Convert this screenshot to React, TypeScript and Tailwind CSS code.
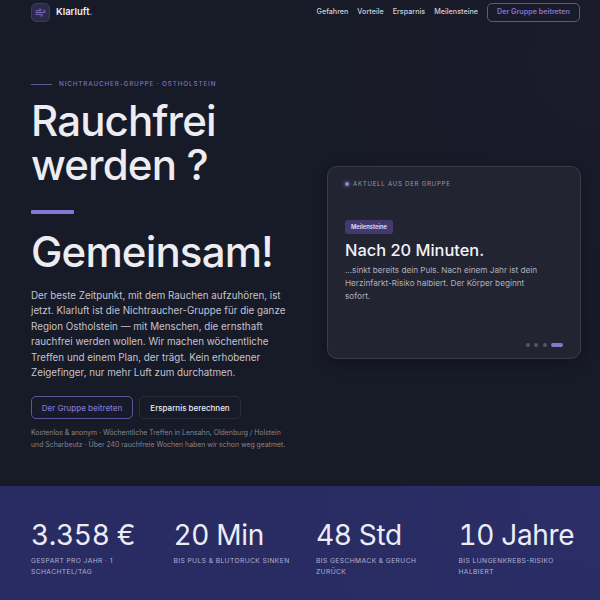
import { Wind } from "lucide-react";

const stats = [
  { value: "3.358 €", label: "Gespart pro Jahr · 1 Schachtel/Tag" },
  { value: "20 Min", label: "bis Puls & Blutdruck sinken" },
  { value: "48 Std", label: "bis Geschmack & Geruch zurück" },
  { value: "10 Jahre", label: "bis Lungenkrebs-Risiko halbiert" },
];

export default function App() {
  return (
    <div className="w-[600px] h-[600px] overflow-hidden flex flex-col bg-[#171a27] bg-[radial-gradient(circle_at_100%_10%,#1b1b2b_0%,#171a27_40%)] font-['Inter',sans-serif] text-[#ececf2]">
      <header className="h-[25px] pl-[31px] pr-[20px] flex items-center justify-between shrink-0">
        <div className="flex items-center gap-[6px]">
          <div className="w-[19px] h-[19px] rounded-[5px] bg-[#2d2a4c] border border-[#3d3965] flex items-center justify-center">
            <Wind size={11} className="text-[#8f7fdc]" strokeWidth={1.75} />
          </div>
          <span className="text-[9.5px] font-semibold text-[#ececf2]">Klarluft<span className="text-[#8f7fdc]">.</span></span>
        </div>
        <nav className="flex items-center gap-[9px] text-[7.2px] font-medium text-[#cfcfda]">
          <span>Gefahren</span>
          <span>Vorteile</span>
          <span>Ersparnis</span>
          <span>Meilensteine</span>
          <span className="h-[19px] w-[93px] flex items-center justify-center rounded-[5px] border border-[#5f559f] text-[#8275cc] font-semibold">Der Gruppe beitreten</span>
        </nav>
      </header>

      <main className="flex-1 grid grid-cols-[1fr_254px] gap-[30px] pl-[31px] pr-[19px] items-start">
        <section className="pt-[55px]">
          <div className="flex items-center gap-[7px] text-[6.3px] leading-[8px] tracking-[0.14em] uppercase text-[#7c73c4] font-medium">
            <span className="w-[21px] h-px bg-[#5f5a90]" />
            Nichtraucher-Gruppe · Ostholstein
          </div>
          <h1 className="mt-[11px] text-[42px] leading-[44px] font-medium tracking-[-0.02em]">Rauchfrei<br />werden ?</h1>
          <div className="mt-[23px] w-[43px] h-[4px] bg-[#8677cf] rounded-[1px]" />
          <div className="mt-[14px] text-[42px] leading-[48px] font-medium tracking-[-0.02em]">Gemeinsam!</div>
          <p className="mt-[12px] text-[9.82px] leading-[15.4px] text-[#c4c4cf]">Der beste Zeitpunkt, mit dem Rauchen aufzuhören, ist jetzt. Klarluft ist die Nichtraucher-Gruppe für die ganze Region Ostholstein — mit Menschen, die ernsthaft rauchfrei werden wollen. Wir machen wöchentliche Treffen und einem Plan, der trägt. Kein erhobener Zeigefinger, nur mehr Luft zum durchatmen.</p>
          <div className="mt-[16px] flex gap-[6px] text-[8px] font-medium">
            <span className="h-[23px] w-[102px] flex items-center justify-center rounded-[5px] border border-[#5f559f] text-[#8275cc]">Der Gruppe beitreten</span>
            <span className="h-[23px] w-[102px] flex items-center justify-center rounded-[5px] border border-[#2c2d3c] text-[#ececf2]">Ersparnis berechnen</span>
          </div>
          <p className="mt-[8px] w-[256px] text-[6.9px] leading-[11.5px] text-[#85858f]">Kostenlos & anonym · Wöchentliche Treffen in Lensahn, Oldenburg / Holstein und Scharbeutz · Über 240 rauchfreie Wochen haben wir schon weg geatmet.</p>
        </section>

        <aside className="mt-[141px] h-[193px] rounded-[10px] border border-[#3a3b49] bg-[#222431] shadow-[0_4px_16px_rgba(0,0,0,0.25)] flex flex-col px-[17px] pt-[13px] pb-[11px]">
          <div className="flex items-center gap-[4px] text-[6.1px] leading-[8px] tracking-[0.12em] uppercase text-[#9b9ba8]">
            <span className="w-[4px] h-[4px] rounded-full bg-[#8f7fdc] shadow-[0_0_4px_#8f7fdc]" />
            Aktuell aus der Gruppe
          </div>
          <span className="mt-[32px] self-start h-[14px] px-[6px] flex items-center rounded-[3px] bg-[#43386f] text-[5.8px] font-semibold text-[#e4e1f5]">Meilensteine</span>
          <h2 className="mt-[4px] text-[16.4px] leading-[24px] font-medium text-[#f2f2f6]">Nach 20 Minuten.</h2>
          <p className="mt-[2px] text-[8.2px] leading-[13px] text-[#b0b0ba] w-[200px]">...sinkt bereits dein Puls. Nach einem Jahr ist dein Herzinfarkt-Risiko halbiert. Der Körper beginnt sofort.</p>
          <div className="mt-auto flex justify-end items-center gap-[4.5px]">
            <span className="w-[4px] h-[4px] rounded-full bg-[#565764]" />
            <span className="w-[4px] h-[4px] rounded-full bg-[#565764]" />
            <span className="w-[4px] h-[4px] rounded-full bg-[#565764]" />
            <span className="w-[12px] h-[4px] rounded-full bg-[#8677cf]" />
          </div>
        </aside>
      </main>

      <footer className="h-[114px] bg-[#292c62] bg-[radial-gradient(circle_at_100%_0%,#2b2e67_0%,#292c62_50%)] pl-[31px] pr-[21px] pt-[32px] grid grid-cols-4 gap-[22px] shrink-0">
        {stats.map((s) => (
          <div key={s.value}>
            <div className="text-[28px] leading-[34px] whitespace-nowrap text-[#ececf6] font-normal tabular-nums tracking-[-0.012em]">{s.value}</div>
            <div className="mt-[4px] text-[6.7px] leading-[10.6px] tracking-[0.06em] uppercase text-[#aeb0d2]">{s.label}</div>
          </div>
        ))}
      </footer>
    </div>
  );
}
